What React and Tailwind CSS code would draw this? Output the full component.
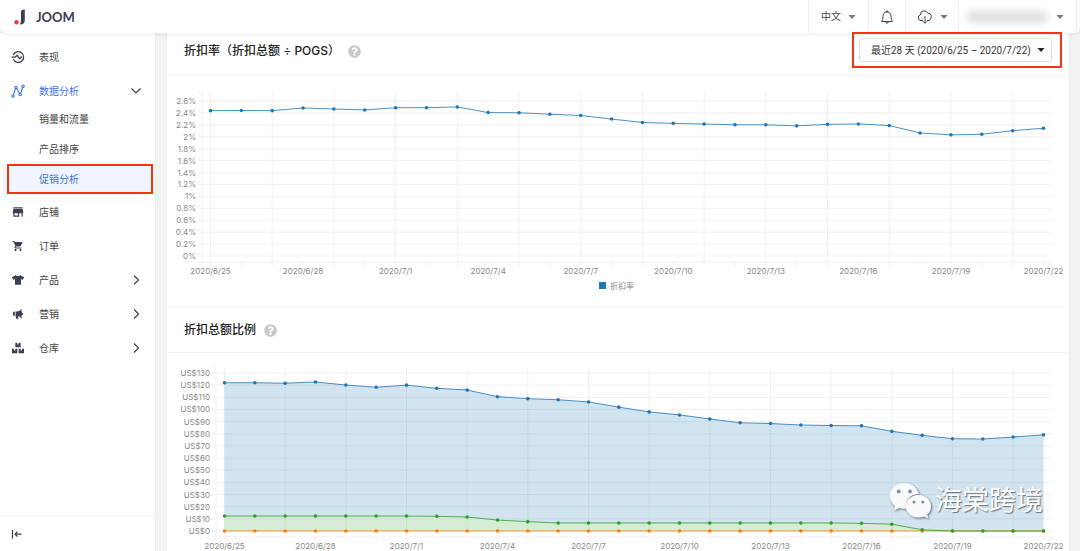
import React, { useState } from 'react';
import { MdStore, MdShoppingCart } from 'react-icons/md';
import { FaTshirt, FaBoxes, FaQuestionCircle } from 'react-icons/fa';

const DAYS = 28;

const rateData = [
  2.438, 2.441, 2.438, 2.483, 2.466, 2.45, 2.487, 2.488, 2.5, 2.406, 2.403, 2.378, 2.357, 2.297,
  2.24, 2.225, 2.213, 2.201, 2.201, 2.183, 2.208, 2.215, 2.188, 2.064, 2.032, 2.042, 2.102, 2.143,
];

const blueData = [
  122, 122, 121.6, 122.6, 120.1, 118.3, 120, 117.4, 116, 110.5, 108.9, 108, 106.2, 101.9,
  98, 95.5, 92.2, 89.1, 88.4, 87.2, 86.8, 86.5, 82, 78.7, 75.9, 75.7, 77.3, 79.1,
];

const greenData = [
  12.3, 12.3, 12.3, 12.3, 12.3, 12.3, 12.3, 12.1, 11.5, 9, 7.7, 6.6, 6.6, 6.6,
  6.6, 6.6, 6.6, 6.6, 6.6, 6.6, 6.6, 6.3, 5.6, 1, 0, 0, 0, 0,
];

const orangeData = Array(DAYS).fill(0);

const dates = Array.from({ length: DAYS }, (_, i) => {
  const d = new Date(2020, 5, 25 + i);
  return `${d.getFullYear()}/${d.getMonth() + 1}/${d.getDate()}`;
});

const rateTicks = Array.from({ length: 14 }, (_, i) => i * 0.2);
const moneyTicks = Array.from({ length: 14 }, (_, i) => i * 10);

function Caret({ className }) {
  return (
    <svg viewBox="0 0 8 4" className={`h-1 w-2 shrink-0 ${className}`} aria-hidden="true">
      <path d="M0.5 0h7L4 4z" fill="currentColor" />
    </svg>
  );
}

function Chevron({ open }) {
  return (
    <svg viewBox="0 0 12 12" className="h-3 w-3" fill="none" stroke="#3d4055" strokeWidth="1.2" aria-hidden="true">
      <path d={open ? 'M1.5 3.5 6 8l4.5-4.5' : 'M4 1.5 8.5 6 4 10.5'} />
    </svg>
  );
}

function PulseIcon({ className }) {
  return (
    <svg viewBox="0 0 14 14" className={className} fill="none" stroke="currentColor" strokeWidth="1.3" aria-hidden="true">
      <path d="M2.2 5A5.4 5.4 0 1 1 2.3 9.3" />
      <path d="M0.5 7.2H4.2L6.2 5.3 8.5 8.7 10.3 7H11" strokeLinejoin="round" />
    </svg>
  );
}

function AnalyticsIcon({ className }) {
  return (
    <svg viewBox="0 0 14 14" className={className} fill="none" stroke="currentColor" strokeWidth="1.1" aria-hidden="true">
      <path d="M2.4 10.8 4.5 4.6M5.7 4.4 8.5 9.4M9.7 9.2 11.7 3.3" />
      <circle cx="2" cy="12" r="1.2" />
      <circle cx="5" cy="3.4" r="1.2" />
      <circle cx="9.2" cy="10.5" r="1.2" />
      <circle cx="12" cy="2.2" r="1.2" />
    </svg>
  );
}

function HornIcon({ className }) {
  return (
    <svg viewBox="0 0 12 12" className={className} fill="currentColor" aria-hidden="true">
      <path d="M2.8 3.5V8H2.2Q0.8 8 0.8 5.8T2.2 3.5zM3.6 3.5H5.2Q7.6 3.2 9.6 1.3V4.6Q11.2 5 11.2 5.9T9.6 7.2V10.4Q7.600 8.4 6 8.1L6.5 10.8H4.3L3.6 8z" />
    </svg>
  );
}

function Logo() {
  return (
    <a href="#home" className="flex items-center gap-2.5 text-[#3a3d52]">
      <svg viewBox="0 0 12 16" className="h-4 w-3" aria-hidden="true">
        <circle cx="2.5" cy="13.3" r="2.2" fill="#f93a3a" />
        <path d="M7 2.2Q7.2 0.6 10.8 0.5V11.5Q10.5 15.5 5.7 15.5Q7 14 7 11.5z" fill="currentColor" />
      </svg>
      <span className="font-['Lato',sans-serif] text-[13px] font-bold leading-4">JOOM</span>
    </a>
  );
}

function Header() {
  return (
    <header className="relative z-10 flex h-[33px] shrink-0 items-stretch justify-between rounded-b-md bg-white pl-3.5 pr-[3px] shadow-[0_1px_6px_rgba(0,0,0,0.08)]">
      <Logo />
      <div className="flex items-stretch divide-x divide-[#eeeeee] border-x border-[#eeeeee] text-[#444444]">
        <div className="relative flex w-[60px] items-center">
          <select aria-label="语言" className="w-full appearance-none bg-transparent pl-3 text-[10px]">
            <option>中文</option>
          </select>
          <Caret className="pointer-events-none absolute right-3 text-[#777777]" />
        </div>
        <button type="button" aria-label="通知" className="flex w-[37px] items-center justify-center">
          <svg viewBox="0 0 14 14" className="h-3.5 w-3.5" fill="none" stroke="currentColor" aria-hidden="true">
            <path d="M1.5 11.5Q3 10 3 6.5Q3 2 7 2T11 6.500Q11 10 12.5 11.5zM6 2Q6 0.8 7 0.8T8 2M5.5 11.5Q5.7 13.2 7 13.2T8.5 11.5" />
          </svg>
        </button>
        <button type="button" aria-label="下载" className="flex w-[53px] items-center justify-center gap-[7px]">
          <svg viewBox="0 0 16 14" className="h-3.5 w-4" fill="none" stroke="currentColor" aria-hidden="true">
            <path d="M6 10.5H4A2.8 2.8 0 0 1 3.3 5Q3.3 1 7 0.8Q9.7 0.7 10.700 3.2Q13.500 2.800 14.200 5.5T12.500 10.500H10M8 6V13M6 11.300 8 13.300 10 11.300" />
          </svg>
          <Caret className="text-[#777777]" />
        </button>
        <button type="button" aria-label="账户" className="flex w-[117px] items-center justify-between pl-2 pr-3">
          <span className="h-2.5 w-20 rounded bg-[#d9d9d9] blur-[4px]" />
          <Caret className="text-[#777777]" />
        </button>
      </div>
    </header>
  );
}

const subItems = ['销量和流量', '产品排序', '促销分析'];

const menuTop = [
  { label: '表现', icon: PulseIcon, large: true },
  { label: '数据分析', icon: AnalyticsIcon, large: true, active: true, open: true },
];

const menuBottom = [
  { label: '店铺', icon: MdStore, large: true },
  { label: '订单', icon: MdShoppingCart },
  { label: '产品', icon: FaTshirt, more: true },
  { label: '营销', icon: HornIcon, more: true },
  { label: '仓库', icon: FaBoxes, more: true },
];

function MenuItem({ label, icon: Icon, large, more, open, active }) {
  return (
    <li>
      <a
        href="#menu"
        className={`flex h-[34px] items-center pl-[11px] pr-[13px] ${active ? 'text-[#3f74dc]' : 'text-[#3d4055]'}`}
      >
        <span className="flex w-7 items-center">
          <span className="flex w-3.5 justify-center">
            <Icon className={large ? 'h-3.5 w-3.5' : 'h-3 w-3'} />
          </span>
        </span>
        <span className={`flex-1 ${active ? '' : 'text-[#444444]'}`}>{label}</span>
        {(more || open) && <Chevron open={open} />}
      </a>
    </li>
  );
}

function Sidebar() {
  return (
    <aside className="flex w-[156px] shrink-0 flex-col justify-between border-r border-[#ececec] bg-white text-[10px]">
      <nav className="pt-[7px]">
        <ul>
          {menuTop.map((item) => (
            <MenuItem key={item.label} {...item} />
          ))}
        </ul>
        <ul className="-mt-1">
          {subItems.map((label) => {
            const current = label === '促销分析';
            return (
              <li key={label} className="relative">
                <a
                  href="#sub"
                  className={`ml-[3px] mr-1 flex h-[30px] items-center rounded pl-9 ${
                    current ? 'bg-[#f0f4fe] text-[#3f74dc]' : 'text-[#444444]'
                  }`}
                >
                  {label}
                </a>
                {current && (
                  <span className="pointer-events-none absolute inset-y-0 left-[7px] right-0.5 border-2 border-[#f5330f]" />
                )}
              </li>
            );
          })}
        </ul>
        <ul className="mt-px">
          {menuBottom.map((item) => (
            <MenuItem key={item.label} {...item} />
          ))}
        </ul>
      </nav>
      <div className="border-t border-[#f0f0f0]">
        <button type="button" aria-label="收起" className="flex h-[35px] items-center pl-[11px] text-[#3d4055]">
          <svg viewBox="0 0 12 12" className="h-3 w-3" fill="none" stroke="currentColor" strokeWidth="1.2" aria-hidden="true">
            <path d="M1.5 2V10.500M10.5 6.2H4M6.5 3.7 4 6.2 6.5 8.7" />
          </svg>
        </button>
      </div>
    </aside>
  );
}

// Gridlines, axis labels and series of one chart
function Chart({ label, left, first, top, zero, topValue, topTick, bottom, ticks, format, series, legend }) {
  const right = 884;
  const last = 876.5;
  const step = (last - first) / (DAYS - 1);
  const x = (i) => first + i * step;
  const y = (v) => zero - (v * (zero - topTick)) / topValue;
  const line = (data) => data.map((v, i) => `${x(i)},${y(v)}`).join(' ');

  return (
    <svg viewBox="0 0 902 231" className="block w-full" role="img" aria-label={label}>
      <g stroke="#f1f1f1" fill="none">
        {ticks.map((t) => (
          <line key={t} x1={left - 4} x2={right} y1={y(t)} y2={y(t)} />
        ))}
        <path d={`M${left - 4} ${top}H${left}V${bottom + 4}M${left - 4} ${bottom}H${right}V${bottom + 4}`} />
        {dates.map((d, i) => (
          <line key={d} x1={x(i)} x2={x(i)} y1={i % 2 ? bottom : top} y2={bottom + 4} />
        ))}
      </g>

      {series.map((s) =>
        s.fill ? (
          <polygon
            key={s.color}
            points={`${line(s.data)} ${line(s.base).split(' ').reverse().join(' ')}`}
            fill={s.color}
            fillOpacity="0.2"
          />
        ) : null
      )}
      {series.map((s) => (
        <g key={s.color} fill={s.color}>
          <polyline points={line(s.data)} fill="none" stroke={s.color} strokeOpacity="0.8" />
          {s.data.map((v, i) => (
            <circle key={i} cx={x(i)} cy={y(v)} r="1.8" />
          ))}
        </g>
      ))}

      <g className="text-[8px]" fill="#888888">
        {ticks.map((t) => (
          <text key={t} x={left - 6} y={y(t) + 3} textAnchor="end">
            {format(t)}
          </text>
        ))}
        {dates.map((d, i) =>
          i % 3 === 0 ? (
            <text key={d} x={x(i)} y={bottom + 12} textAnchor="middle">
              {d}
            </text>
          ) : null
        )}
        {legend && (
          <>
            <rect x="432" y="206" width="7" height="7" fill="#1f77b4" />
            <text x="443" y="213">
              {legend}
            </text>
          </>
        )}
      </g>
    </svg>
  );
}

function Title({ children }) {
  return (
    <h2 className="flex items-center gap-2 text-[12px] font-medium text-[#222222]">
      {children}
      <button type="button" aria-label="帮助" className="text-[#c9c9c9]">
        <FaQuestionCircle className="h-[13px] w-[13px]" />
      </button>
    </h2>
  );
}

function Watermark() {
  return (
    <div className="pointer-events-none absolute bottom-8 right-[37px] flex items-center gap-1">
      <svg viewBox="0 0 42 37" className="h-[37px] w-[42px] drop-shadow-[1px_1px_1px_rgba(0,0,0,0.5)]" aria-hidden="true">
        <path
          d="M15 1C7 1 0.8 6.5 0.8 13.8C0.8 18 2.8 21.5 6.2 24L5 28.5L10.3 26Q13 27 17 26.7C15.5 18.5 21 12.3 29.7 12C28.5 5.5 22.5 1 15 1z"
          fill="#f8fafc"
        />
        <path
          d="M29.5 13C22 13 16.8 18 16.8 24.3S22.5 35.6 29.5 35.6Q32.5 35.6 35 34.5L39.3 36.5L38.2 32.6C41 30.5 42 27.5 42 24.3C42 18 36.5 13 29.5 13z"
          fill="#f8fafc"
        />
        <g fill="#7f929d">
          <circle cx="9.7" cy="9.5" r="1.9" />
          <circle cx="21" cy="9.5" r="1.9" />
          <circle cx="25" cy="20" r="1.6" />
          <circle cx="33.8" cy="20" r="1.6" />
        </g>
      </svg>
      <span className="text-[27px] leading-8 text-white [text-shadow:1px_1px_1px_rgba(0,0,0,0.5)]">海棠跨境</span>
    </div>
  );
}

function App() {
  const [range, setRange] = useState('28');

  return (
    <div className="flex h-screen flex-col overflow-hidden bg-[#f3f3f3] font-['Inter','Noto_Sans_CJK_SC',sans-serif]">
      <Header />
      <div className="flex min-h-0 flex-1">
        <Sidebar />
        <main className="min-w-0 flex-1 px-[11px]">
          <div className="bg-white shadow-[0_0_2px_rgba(0,0,0,0.08)]">
            <section>
              <div className="flex h-[43px] items-start justify-between border-b border-[#f1f1f1] pl-[17px] pr-[7px]">
                <div className="flex h-9 items-center">
                  <Title>折扣率（折扣总额 ÷ POGS）</Title>
                </div>
                <div className="relative z-20 -mt-px flex h-9 items-center border-2 border-[#f5330f] pl-[5px] pr-2">
                  <select
                    aria-label="日期范围"
                    value={range}
                    onChange={(e) => setRange(e.target.value)}
                    className="h-6 w-[193px] appearance-none rounded-[3px] border border-[#dddddd] bg-white pl-[11px] font-['Roboto','Noto_Sans_CJK_SC',sans-serif] text-[10px] text-[#333333]"
                  >
                    <option value="28">最近28 天 (2020/6/25 – 2020/7/22)</option>
                  </select>
                  <Caret className="pointer-events-none absolute right-[15px] text-[#222222]" />
                </div>
              </div>
              <Chart
                label="折扣率"
                left={35}
                first={43.5}
                top={15}
                topTick={25}
                topValue={2.6}
                zero={180}
                bottom={186}
                ticks={rateTicks}
                format={(t) => `${Number(t.toFixed(1))}%`}
                series={[{ color: '#1f77b4', data: rateData }]}
                legend="折扣率"
              />
            </section>

            <section>
              <div className="flex h-[46px] items-center border-y border-[#f1f1f1] pl-[17px]">
                <Title>折扣总额比例</Title>
              </div>
              <Chart
                label="折扣总额比例"
                left={49}
                first={57.5}
                top={14}
                topTick={20}
                topValue={130}
                zero={178}
                bottom={184}
                ticks={moneyTicks}
                format={(t) => `US$${t}`}
                series={[
                  { color: '#1f77b4', data: blueData, base: greenData, fill: true },
                  { color: '#ff7f0e', data: orangeData },
                  { color: '#2ca02c', data: greenData, base: orangeData, fill: true },
                ]}
              />
            </section>
          </div>
        </main>
      </div>
      <Watermark />
    </div>
  );
}

export default App;
